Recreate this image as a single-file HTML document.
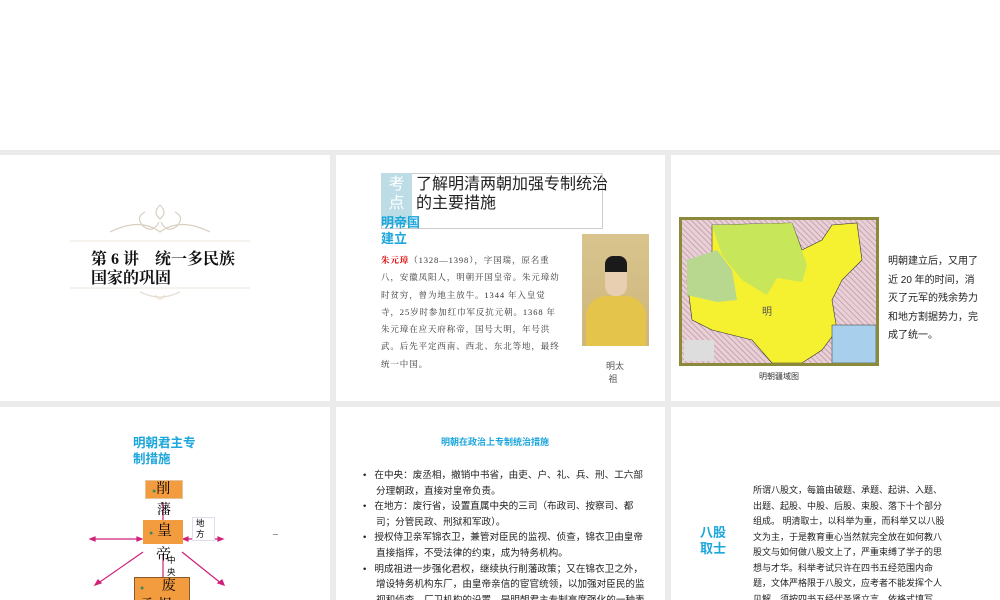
<!DOCTYPE html>
<html><head><meta charset="utf-8"><style>
*{margin:0;padding:0;box-sizing:border-box}
body{width:1000px;height:600px;overflow:hidden;background:#ebebeb;position:relative;font-family:"Liberation Sans","Noto Sans CJK SC",sans-serif}
.top{position:absolute;left:0;top:0;width:1000px;height:150px;background:#fff}
.s{position:absolute;background:#fff;overflow:hidden}
.a{position:absolute}
.blue{color:#1ba6dc;font-weight:bold}
</style></head><body>
<div class="top"></div>
<!-- slide 1 -->
<div class="s" style="left:0;top:155px;width:330px;height:246px">
 <svg class="a" style="left:70px;top:45px" width="200" height="110">
  <path d="M90 5 q-8 8 0 14 q8-6 0-14 M75 12 q-10 5 -2 14 q10 8 16 -4 M105 12 q10 5 2 14 q-10 8 -16 -4 M40 32 q30-15 50 0 q20-15 50 0" stroke="#d8cfc0" fill="none" stroke-width="1.2"/>
  <line x1="0" y1="41" x2="180" y2="41" stroke="#eee7dc"/>
  <line x1="0" y1="88" x2="180" y2="88" stroke="#eee7dc"/>
  <path d="M70 92 q20 10 40 0 M85 95 q5 8 10 0" stroke="#e3dbcd" fill="none"/>
 </svg>
 <div class="a" style="left:91px;top:95px;font-family:'Liberation Serif','Noto Serif CJK SC',serif;font-weight:bold;font-size:16px;line-height:19px;color:#111">第 6 讲　统一多民族<br>国家的巩固</div>
</div>
<!-- slide 2 -->
<div class="s" style="left:336px;top:155px;width:329px;height:246px">
 <div class="a" style="left:45px;top:18px;width:222px;height:56px;border:1px solid #ccc"></div>
 <div class="a" style="left:45px;top:18px;width:31px;height:52px;background:#bcdde6;color:#fff;font-size:16px;line-height:19px;text-align:center;padding-top:2px">考<br>点</div>
 <div class="a" style="left:80px;top:20px;font-size:16px;line-height:19px;color:#222">了解明清两朝加强专制统治<br>的主要措施</div>
 <div class="a blue" style="left:45px;top:60px;font-size:13px;line-height:16px">明帝国<br>建立</div>
 <div class="a" style="left:45px;top:97px;width:182px;font-size:8.5px;letter-spacing:0.9px;line-height:17.3px;color:#333;font-family:'Liberation Serif','Noto Serif CJK SC',serif"><span style="color:#d00;font-weight:bold">朱元璋</span>（1328—1398），字国瑞，原名重八，安徽凤阳人，明朝开国皇帝。朱元璋幼时贫穷，曾为地主放牛。1344 年入皇觉寺，25岁时参加红巾军反抗元朝。1368 年朱元璋在应天府称帝，国号大明，年号洪武。后先平定西南、西北、东北等地，最终统一中国。</div>
 <div class="a" style="left:246px;top:79px;width:67px;height:112px;background:linear-gradient(#d9c48e,#cdb67c)">
  <div class="a" style="left:23px;top:22px;width:22px;height:18px;background:#1a1a1a;border-radius:8px 8px 0 0"></div>
  <div class="a" style="left:23px;top:38px;width:22px;height:24px;background:#e8cfb2;border-radius:0 0 10px 10px"></div>
  <div class="a" style="left:4px;top:62px;width:60px;height:50px;background:#e4c44a;border-radius:20px 20px 0 0"></div>
 </div>
 <div class="a" style="left:270px;top:205px;font-size:9px;line-height:13px;color:#555">明太<br>&nbsp;祖</div>
</div>
<!-- slide 3 -->
<div class="s" style="left:671px;top:155px;width:329px;height:246px">
 <div class="a" style="left:8px;top:62px;width:200px;height:149px;background:#8a8a3a;padding:3px">
  <div style="position:relative;width:194px;height:143px;background:#a8d0ec;overflow:hidden">
   <div class="a" style="left:0;top:0;width:194px;height:143px;background:repeating-linear-gradient(45deg,#e9cfd6 0 3px,#c9a7b3 3px 4px)"></div>
   <svg class="a" style="left:0;top:0" width="194" height="143"><path d="M30 5 L110 3 L120 30 L140 20 L150 5 L175 3 L180 40 L160 60 L150 80 L155 110 L140 130 L120 143 L90 143 L70 120 L30 110 L10 100 L5 60 L30 40 Z" fill="#f5f030" stroke="#333" stroke-width="0.6"/><path d="M30 5 L110 3 L125 45 L120 62 L95 58 L85 75 L60 60 L40 35 Z" fill="#c8e65a"/><path d="M5 40 L35 30 L50 50 L55 80 L35 82 L5 75 Z" fill="#b8d890"/><rect x="150" y="105" width="44" height="38" fill="#a8d0ec" stroke="#333" stroke-width="0.5"/><rect x="2" y="120" width="30" height="21" fill="#ddd"/><text x="80" y="95" font-size="10" fill="#555">明</text></svg>
  </div>
 </div>
 <div class="a" style="left:88px;top:216px;font-size:8px;color:#333">明朝疆域图</div>
 <div class="a" style="left:217px;top:98px;width:96px;font-size:10px;line-height:18.5px;color:#222">明朝建立后，又用了近 20 年的时间，消灭了元军的残余势力和地方割据势力，完成了统一。</div>
</div>
<!-- slide 4 -->
<div class="s" style="left:0;top:407px;width:330px;height:193px">
 <div class="a blue" style="left:133px;top:28px;font-size:12.5px;line-height:16px">明朝君主专<br>制措施</div>
 <svg class="a" style="left:85px;top:75px" width="150" height="120">
  <g stroke="#d0207a" stroke-width="1.2" fill="#d0207a">
   <line x1="78" y1="20" x2="78" y2="43"/><line x1="7" y1="57" x2="55" y2="57"/><polygon points="5,57 10,55 10,59"/><polygon points="57,57 52,55 52,59"/>
   <line x1="100" y1="57" x2="136" y2="57"/><polygon points="138,57 133,55 133,59"/><polygon points="98,57 103,55 103,59"/>
   <line x1="58" y1="70" x2="12" y2="102"/><polygon points="10,103 13,98 16,101"/>
   <line x1="97" y1="70" x2="137" y2="102"/><polygon points="139,103 133,101 137,98"/>
   <line x1="78" y1="72" x2="78" y2="100"/><polygon points="78,102 76,97 80,97"/>
  </g>
 </svg>
 <div class="a" style="left:145px;top:73px;width:38px;height:19px;background:#f39b3f;border:1px solid #e6c49a;font-family:'Liberation Serif','Noto Serif CJK SC',serif;font-size:14px;line-height:18px;padding-left:6px"><span style="color:#3a8a5a;font-size:7px">●</span>削</div>
 <div class="a" style="left:157px;top:92px;font-family:'Liberation Serif','Noto Serif CJK SC',serif;font-size:14px">藩</div>
 <div class="a" style="left:143px;top:113px;width:40px;height:24px;background:#f39b3f;font-family:'Liberation Serif','Noto Serif CJK SC',serif;font-size:15px;line-height:22px;padding-left:6px"><span style="color:#3a8a5a;font-size:7px">●</span> 皇</div>
 <div class="a" style="left:156px;top:136px;font-family:'Liberation Serif','Noto Serif CJK SC',serif;font-size:15px">帝</div>
 <div class="a" style="left:192px;top:110px;width:23px;height:24px;border:1px solid #dde;font-size:8.5px;line-height:11px;padding-left:3px;background:#fff">地<br>方</div>
 <div class="a" style="left:167px;top:147px;font-size:8.5px;line-height:12px">中<br>央</div>
 <div class="a" style="left:134px;top:170px;width:56px;height:26px;background:#f39b3f;border:1px solid #8a5a2a;font-family:'Liberation Serif','Noto Serif CJK SC',serif;font-size:14px;line-height:18px;padding-left:5px"><span style="color:#3a8a5a;font-size:7px">●</span>　 废<br>丞 相</div>
 <div class="a" style="left:273px;top:127px;width:5px;border-top:1px solid #999"></div>
</div>
<!-- slide 5 -->
<div class="s" style="left:336px;top:407px;width:329px;height:193px">
 <div class="a blue" style="left:105px;top:28px;font-size:9px">明朝在政治上专制统治措施</div>
 <div class="a" style="left:27px;top:61px;width:286px;font-size:9.6px;line-height:15.6px;color:#222">
  <div style="padding-left:13px;text-indent:-13px">•&nbsp;&nbsp; 在中央：废丞相，撤销中书省，由吏、户、礼、兵、刑、工六部分理朝政，直接对皇帝负责。</div>
  <div style="padding-left:13px;text-indent:-13px">•&nbsp;&nbsp; 在地方：废行省，设置直属中央的三司（布政司、按察司、都司；分管民政、刑狱和军政）。</div>
  <div style="padding-left:13px;text-indent:-13px">•&nbsp;&nbsp; 授权侍卫亲军锦衣卫，兼管对臣民的监视、侦查，锦衣卫由皇帝直接指挥，不受法律的约束，成为特务机构。</div>
  <div style="padding-left:13px;text-indent:-13px">•&nbsp;&nbsp; 明成祖进一步强化君权，继续执行削藩政策；又在锦衣卫之外，增设特务机构东厂，由皇帝亲信的宦官统领，以加强对臣民的监视和侦查。厂卫机构的设置，是明朝君主专制高度强化的一种表现。</div>
 </div>
</div>
<!-- slide 6 -->
<div class="s" style="left:671px;top:407px;width:329px;height:193px">
 <div class="a blue" style="left:29px;top:118px;font-size:13px;line-height:16px">八股<br>取士</div>
 <div class="a" style="left:82px;top:76px;width:192px;font-size:9px;line-height:15.5px;color:#222">所谓八股文，每篇由破题、承题、起讲、入题、出题、起股、中股、后股、束股、落下十个部分组成。 明清取士，以科举为重，而科举又以八股文为主，于是教育重心当然就完全放在如何教八股文与如何做八股文上了，严重束缚了学子的思想与才华。科举考试只许在四书五经范围内命题，文体严格限于八股文，应考者不能发挥个人见解，须按四书五经代圣贤立言，依格式填写。明清统治者用“八股取士”来禁锢知识分子思想。</div>
</div>
</body></html>
